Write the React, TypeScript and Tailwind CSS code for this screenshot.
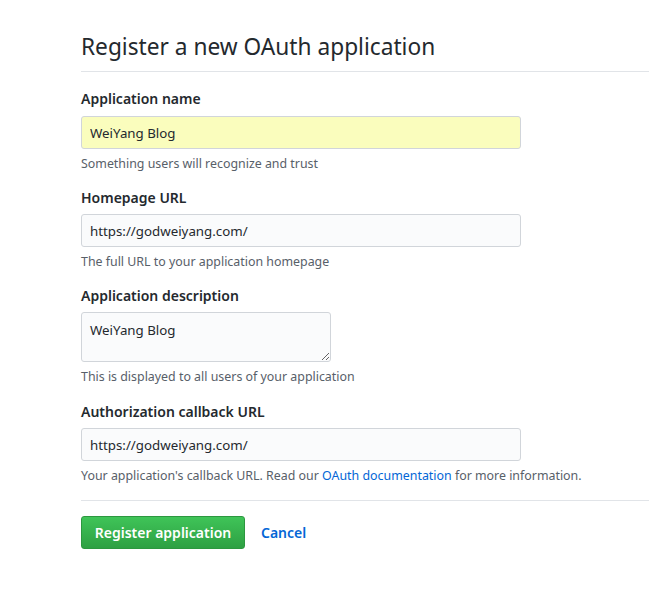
import React from "react";

const font = { fontFamily: '"Noto Sans", "Open Sans", Arial, sans-serif' };

function Label({ children }: { children: React.ReactNode }) {
  return (
    <label className="block text-[14px] font-semibold leading-[21px] text-[#24292e]">
      {children}
    </label>
  );
}

function Note({ children }: { children: React.ReactNode }) {
  return <p className="mt-[6px] text-[12.4px] leading-[18px] text-[#586069]">{children}</p>;
}

export default function App() {
  return (
    <div className="min-h-[590px] w-full bg-white pl-[81px] pt-[32px]" style={font}>
      <h2 className="border-b border-[#e1e4e8] pb-[9px] text-[22.7px] font-normal leading-[30px] text-[#24292e]">
        Register a new OAuth application
      </h2>
      <form onSubmit={(e) => e.preventDefault()}>
        <div className="mt-[16px]">
          <Label>Application name</Label>
          <input
            readOnly
            value="WeiYang Blog"
            className="mt-[7px] block h-[33px] w-[440px] rounded-[3px] border border-[#d1d5da] bg-[#fafdbd] px-[8px] text-[13.3px] text-[#24292e] outline-none"
          />
          <Note>Something users will recognize and trust</Note>
        </div>
        <div className="mt-[14px]">
          <Label>Homepage URL</Label>
          <input
            readOnly
            value="https://godweiyang.com/"
            className="mt-[6px] block h-[33px] w-[440px] rounded-[3px] border border-[#d1d5da] bg-[#fafbfc] px-[8px] text-[13.3px] text-[#24292e] outline-none"
          />
          <Note>The full URL to your application homepage</Note>
        </div>
        <div className="mt-[14px]">
          <Label>Application description</Label>
          <textarea
            readOnly
            value="WeiYang Blog"
            className="mt-[6px] block h-[50px] w-[250px] resize rounded-[3px] border border-[#d1d5da] bg-[#fafbfc] px-[8px] pb-[4px] pt-[7px] text-[13.3px] leading-[20px] text-[#24292e] outline-none"
          />
          <Note>This is displayed to all users of your application</Note>
        </div>
        <div className="mt-[15px]">
          <Label>Authorization callback URL</Label>
          <input
            readOnly
            value="https://godweiyang.com/"
            className="mt-[6px] block h-[33px] w-[440px] rounded-[3px] border border-[#d1d5da] bg-[#fafbfc] px-[8px] text-[13.3px] text-[#24292e] outline-none"
          />
          <Note>
            Your application&apos;s callback URL. Read our{" "}
            <a href="#" className="text-[#0366d6]">
              OAuth documentation
            </a>{" "}
            for more information.
          </Note>
        </div>
        <div className="mt-[15px] border-t border-[#e1e4e8]" />
        <div className="mt-[15px] flex items-center gap-[16px]">
          <button
            type="submit"
            className="h-[33px] w-[164px] rounded-[3px] border border-[#2c973f] bg-gradient-to-b from-[#3fc458] to-[#2ea043] text-[14px] font-semibold text-white"
          >
            Register application
          </button>
          <a href="#" className="text-[14px] font-semibold text-[#0366d6]">
            Cancel
          </a>
        </div>
      </form>
    </div>
  );
}
